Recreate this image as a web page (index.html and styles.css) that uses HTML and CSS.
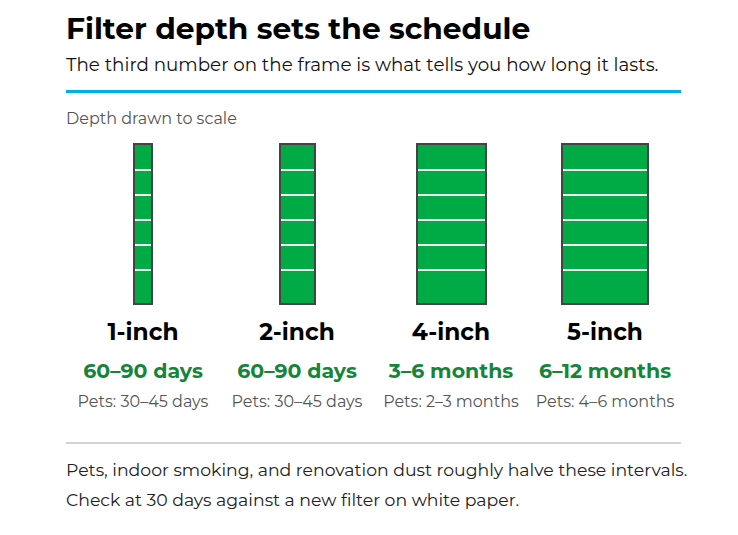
FILE: index.html
```html
<!DOCTYPE html>
<html lang="en">
<head>
<meta charset="utf-8">
<title>Filter depth sets the schedule</title>
<link rel="stylesheet" href="styles.css">
</head>
<body>
<main class="card">
  <h1 class="title">Filter depth sets the schedule</h1>
  <p class="subtitle">The third number on the frame is what tells you how long it lasts.</p>
  <div class="rule-blue"></div>
  <p class="caption">Depth drawn to scale</p>
  <div class="grid">
    <div class="col">
      <svg class="bar" width="20" height="162" viewBox="0 0 20 162"><rect x="1" y="1" width="18" height="160" fill="#00aa44" stroke="#444" stroke-width="2"/><g stroke="#f2f2f2" stroke-width="2"><line x1="2" x2="18" y1="27" y2="27"/><line x1="2" x2="18" y1="52" y2="52"/><line x1="2" x2="18" y1="77" y2="77"/><line x1="2" x2="18" y1="102" y2="102"/><line x1="2" x2="18" y1="127" y2="127"/></g></svg>
      <div class="size">1-inch</div>
      <div class="life">60–90 days</div>
      <div class="pets">Pets: 30–45 days</div>
    </div>
    <div class="col">
      <svg class="bar" width="37" height="162" viewBox="0 0 37 162"><rect x="1" y="1" width="35" height="160" fill="#00aa44" stroke="#444" stroke-width="2"/><g stroke="#f2f2f2" stroke-width="2"><line x1="2" x2="35" y1="27" y2="27"/><line x1="2" x2="35" y1="52" y2="52"/><line x1="2" x2="35" y1="77" y2="77"/><line x1="2" x2="35" y1="102" y2="102"/><line x1="2" x2="35" y1="127" y2="127"/></g></svg>
      <div class="size">2-inch</div>
      <div class="life">60–90 days</div>
      <div class="pets">Pets: 30–45 days</div>
    </div>
    <div class="col">
      <svg class="bar" width="71" height="162" viewBox="0 0 71 162"><rect x="1" y="1" width="69" height="160" fill="#00aa44" stroke="#444" stroke-width="2"/><g stroke="#f2f2f2" stroke-width="2"><line x1="2" x2="69" y1="27" y2="27"/><line x1="2" x2="69" y1="52" y2="52"/><line x1="2" x2="69" y1="77" y2="77"/><line x1="2" x2="69" y1="102" y2="102"/><line x1="2" x2="69" y1="127" y2="127"/></g></svg>
      <div class="size">4-inch</div>
      <div class="life">3–6 months</div>
      <div class="pets">Pets: 2–3 months</div>
    </div>
    <div class="col">
      <svg class="bar" width="88" height="162" viewBox="0 0 88 162"><rect x="1" y="1" width="86" height="160" fill="#00aa44" stroke="#444" stroke-width="2"/><g stroke="#f2f2f2" stroke-width="2"><line x1="2" x2="86" y1="27" y2="27"/><line x1="2" x2="86" y1="52" y2="52"/><line x1="2" x2="86" y1="77" y2="77"/><line x1="2" x2="86" y1="102" y2="102"/><line x1="2" x2="86" y1="127" y2="127"/></g></svg>
      <div class="size">5-inch</div>
      <div class="life">6–12 months</div>
      <div class="pets">Pets: 4–6 months</div>
    </div>
  </div>
  <div class="rule-gray"></div>
  <p class="note">Pets, indoor smoking, and renovation dust roughly halve these intervals.</p>
  <p class="note">Check at 30 days against a new filter on white paper.</p>
</main>
</body>
</html>
```

FILE: styles.css
```css
html, body {
  margin: 0;
  padding: 0;
  background: #ffffff;
}
body {
  font-family: "Montserrat", "Open Sans", "DejaVu Sans", sans-serif;
  color: #111;
}
.card {
  width: 615px;
  margin-left: 66px;
  padding-top: 11px;
}
.title {
  margin: 0;
  font-size: 29.7px;
  font-weight: 700;
  line-height: 34px;
  color: #000;
}
.subtitle {
  margin: 8px 0 0;
  font-size: 18.3px;
  line-height: 24px;
  color: #111;
}
.rule-blue {
  height: 3px;
  background: #00b0e4;
  margin-top: 13px;
}
.caption {
  margin: 16px 0 0;
  font-size: 16px;
  line-height: 20px;
  color: #555;
}
.grid {
  display: grid;
  grid-template-columns: repeat(4, 154px);
  margin-top: 14px;
}
.col {
  display: flex;
  flex-direction: column;
  align-items: center;
}
.bar {
  display: block;
}
.size {
  margin-top: 13px;
  font-size: 23.3px;
  font-weight: 700;
  line-height: 28px;
  color: #000;
}
.life {
  margin-top: 12px;
  font-size: 20.5px;
  font-weight: 700;
  line-height: 26px;
  color: #16853a;
}
.pets {
  margin-top: 8px;
  font-size: 16px;
  line-height: 20px;
  color: #555;
}
.rule-gray {
  height: 2px;
  background: #d4d4d4;
  margin-top: 30px;
}
.note {
  margin: 16px 0 0;
  font-size: 17.3px;
  line-height: 20px;
  color: #222;
  white-space: nowrap;
}
.note + .note {
  margin-top: 10px;
}
```
